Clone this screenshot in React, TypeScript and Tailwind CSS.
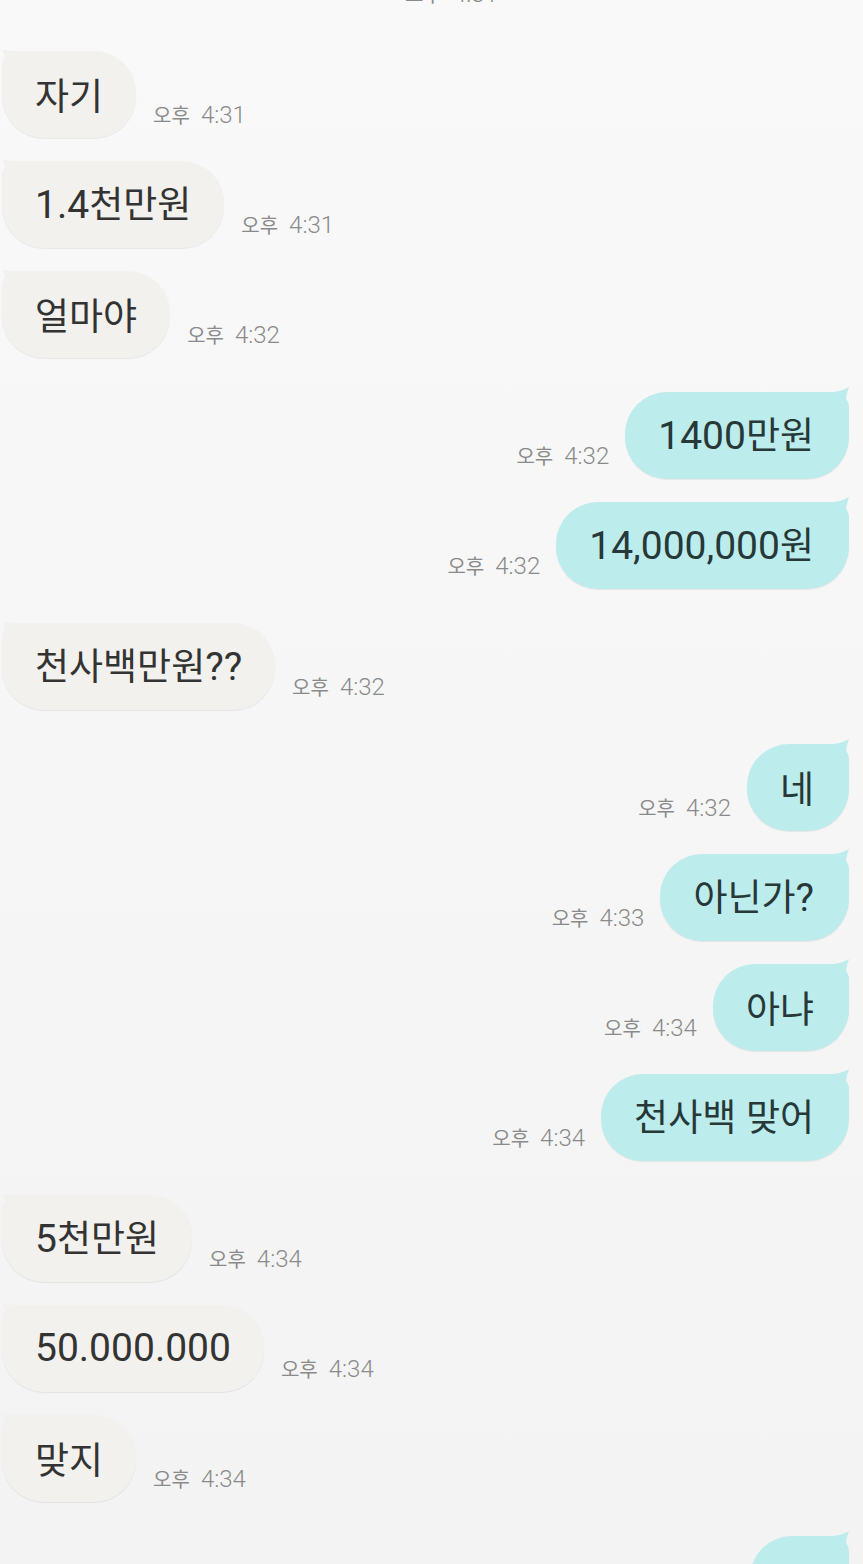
import React from "react";

type Msg = { side: "l" | "r"; text: string; time: string };

const msgs: Msg[] = [
  { side: "l", text: "자기", time: "4:31" },
  { side: "l", text: "1.4천만원", time: "4:31" },
  { side: "l", text: "얼마야", time: "4:32" },
  { side: "r", text: "1400만원", time: "4:32" },
  { side: "r", text: "14,000,000원", time: "4:32" },
  { side: "l", text: "천사백만원??", time: "4:32" },
  { side: "r", text: "네", time: "4:32" },
  { side: "r", text: "아닌가?", time: "4:33" },
  { side: "r", text: "아냐", time: "4:34" },
  { side: "r", text: "천사백 맞어", time: "4:34" },
  { side: "l", text: "5천만원", time: "4:34" },
  { side: "l", text: "50.000.000", time: "4:34" },
  { side: "l", text: "맞지", time: "4:34" },
];

const FONT = { fontFamily: 'Roboto, "Noto Sans CJK KR", sans-serif' };
const KR = { fontFamily: '"Noto Sans CJK KR", sans-serif' };

function splitRuns(s: string) {
  const runs: { k: boolean; t: string }[] = [];
  for (const ch of s) {
    const k = /[\uAC00-\uD7A3]/.test(ch);
    const last = runs[runs.length - 1];
    if (last && last.k === k) last.t += ch;
    else runs.push({ k, t: ch });
  }
  return runs;
}

function MsgText({ text }: { text: string }) {
  return (
    <span className="leading-none whitespace-pre">
      {splitRuns(text).map((r, i) =>
        r.k ? (
          <span key={i} className="text-[37px]" style={KR}>
            {r.t}
          </span>
        ) : (
          <span key={i} className="text-[39px]">
            {r.t}
          </span>
        )
      )}
    </span>
  );
}

function Time({ time }: { time: string }) {
  return (
    <div className="mb-[11px] leading-none whitespace-pre text-[#8a8a8a]">
      <span className="text-[20px]" style={KR}>
        오후
      </span>
      <span className="ml-[11px] text-[24px] font-light">{time}</span>
    </div>
  );
}

function LeftTail() {
  return (
    <svg className="absolute left-0 top-0 overflow-visible" width="16" height="16" viewBox="0 0 16 16">
      <path d="M0 -1 L14 0 L14 14 L4 14 Q4 5 0 -1 Z" fill="#f2f1ed" />
    </svg>
  );
}

function RightTail() {
  return (
    <svg className="absolute right-0 top-0 overflow-visible" width="20" height="20" viewBox="0 0 20 20">
      <path d="M2 0 Q12 0 20 -5 Q16 5 17 16 L2 16 Z" fill="#bdecec" />
    </svg>
  );
}

function Row({ m, first }: { m: Msg; first: boolean }) {
  if (m.side === "l") {
    return (
      <div className={`flex items-end pl-[2px] ${first ? "mt-[34px]" : "mt-[23px]"}`}>
        <div className="relative flex h-[87px] items-center rounded-[42px] rounded-tl-[16px] bg-[#f2f1ed] pl-[33px] pr-[33px] text-[#333333] shadow-[0_1px_1px_rgba(0,0,0,0.07)]">
          <LeftTail />
          <MsgText text={m.text} />
        </div>
        <div className="ml-[17px]">
          <Time time={m.time} />
        </div>
      </div>
    );
  }
  return (
    <div className={`flex items-end justify-end pr-[14px] ${first ? "mt-[34px]" : "mt-[23px]"}`}>
      <div className="mr-[16px]">
        <Time time={m.time} />
      </div>
      <div className="relative flex h-[87px] items-center rounded-[42px] rounded-tr-[16px] bg-[#bdecec] pl-[33px] pr-[35px] text-[#263838] shadow-[0_1px_1px_rgba(0,0,0,0.07)]">
        <RightTail />
        <MsgText text={m.text} />
      </div>
    </div>
  );
}

export default function App() {
  return (
    <div
      className="h-[1564px] w-[863px] overflow-hidden bg-gradient-to-b from-[#f9f9f9] to-[#f3f3f3]"
      style={FONT}
    >
      <div className="-mt-[18px] pl-[405px]">
        <Time time="4:31" />
      </div>
      <div className="mt-[3px] flex flex-col">
        {msgs.map((m, i) => (
          <Row key={i} m={m} first={i === 0 || msgs[i - 1].side !== m.side} />
        ))}
        <div className="mt-[34px] flex justify-end pr-[14px]">
          <div className="relative h-[87px] w-[99px] rounded-[42px] rounded-tr-[16px] bg-[#bdecec]">
            <RightTail />
          </div>
        </div>
      </div>
    </div>
  );
}
